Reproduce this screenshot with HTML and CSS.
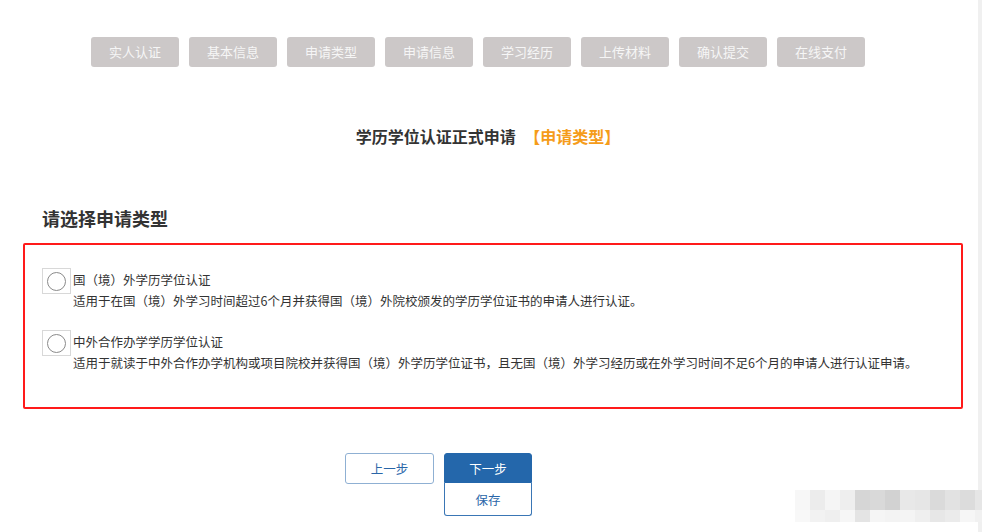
FILE: index.html
```html
<!DOCTYPE html>
<html lang="zh-CN">
<head>
<meta charset="utf-8">
<title>学历学位认证正式申请</title>
<link rel="stylesheet" href="styles.css">
</head>
<body>
<div class="page">
  <main class="main">
    <nav class="steps">
      <span class="step">实人认证</span>
      <span class="step">基本信息</span>
      <span class="step">申请类型</span>
      <span class="step">申请信息</span>
      <span class="step">学习经历</span>
      <span class="step">上传材料</span>
      <span class="step">确认提交</span>
      <span class="step">在线支付</span>
    </nav>
    <h1 class="title">学历学位认证正式申请 <span class="title-tag">【申请类型】</span></h1>
    <h2 class="heading">请选择申请类型</h2>
    <section class="options">
      <label class="option">
        <span class="radio"><span class="radio-dot"></span></span>
        <span class="option-text">
          <span class="option-name">国（境）外学历学位认证</span>
          <span class="option-desc">适用于在国（境）外学习时间超过6个月并获得国（境）外院校颁发的学历学位证书的申请人进行认证。</span>
        </span>
      </label>
      <label class="option">
        <span class="radio"><span class="radio-dot"></span></span>
        <span class="option-text">
          <span class="option-name">中外合作办学学历学位认证</span>
          <span class="option-desc">适用于就读于中外合作办学机构或项目院校并获得国（境）外学历学位证书，且无国（境）外学习经历或在外学习时间不足6个月的申请人进行认证申请。</span>
        </span>
      </label>
    </section>
    <div class="actions">
      <button class="btn btn-prev">上一步</button>
      <div class="action-col">
        <button class="btn btn-next">下一步</button>
        <button class="btn btn-save">保存</button>
      </div>
    </div>
    <div class="mosaic">
      <span class="tile" style="background:#f7f7f7"></span><span class="tile" style="background:#ececec"></span><span class="tile" style="background:#f5f5f5"></span><span class="tile" style="background:#eeeeee"></span><span class="tile" style="background:#d6d6d6"></span><span class="tile" style="background:#d9d9d9"></span><span class="tile" style="background:#d2d2d2"></span><span class="tile" style="background:#e8e8e8"></span><span class="tile" style="background:#e6e6e6"></span><span class="tile" style="background:#dadada"></span><span class="tile" style="background:#e2e2e2"></span><span class="tile" style="background:#dcdcdc"></span><span class="tile" style="background:#e6e6e6"></span>
      <span class="tile" style="background:#f8f8f8"></span><span class="tile" style="background:#f2f2f2"></span><span class="tile" style="background:#efefef"></span><span class="tile" style="background:#f6f6f6"></span><span class="tile" style="background:#e4e4e4"></span><span class="tile" style="background:#f5f5f5"></span><span class="tile" style="background:#f3f3f3"></span><span class="tile" style="background:#f4f4f4"></span><span class="tile" style="background:#efefef"></span><span class="tile" style="background:#e7e7e7"></span><span class="tile" style="background:#ebebeb"></span><span class="tile" style="background:#f6f6f6"></span><span class="tile" style="background:#f1f1f1"></span>
    </div>
  </main>
  <div class="scroll-edge"></div>
</div>
</body>
</html>
```
FILE: styles.css
```css
* { box-sizing: border-box; }
html, body { margin: 0; padding: 0; background: #fff; }
body {
  font-family: "Noto Sans CJK SC", "Microsoft YaHei", "Noto Sans", sans-serif;
  color: #333;
  width: 982px;
  height: 532px;
  overflow: hidden;
}
.page { display: flex; height: 532px; }
.main { flex: 1; position: relative; display: flex; flex-direction: column; }
.scroll-edge { width: 4px; background: #f0f0f0; }

.steps {
  display: flex;
  gap: 10px;
  padding: 37px 0 0 91px;
}
.step {
  width: 88px;
  height: 30px;
  background: #ccc8c8;
  border-radius: 3px;
  color: #f6f6f6;
  font-size: 13px;
  line-height: 30px;
  text-align: center;
}

.title {
  margin: 57px 0 0 -2px;
  font-size: 16px;
  line-height: 24px;
  font-weight: 700;
  text-align: center;
  color: #333;
}
.title-tag { color: #f59c1a; margin-left: 5px; }

.heading {
  margin: 57px 0 0 42px;
  font-size: 18px;
  line-height: 26px;
  font-weight: 700;
  color: #333;
}

.options {
  margin: 12px 15px 0 23px;
  border: 2px solid #ff1a1a;
  border-radius: 2px;
  padding: 23px 0 34px 17px;
  display: flex;
  flex-direction: column;
  gap: 19px;
}
.option { display: flex; align-items: flex-start; }
.radio {
  width: 29px;
  height: 26px;
  border: 1px solid #d8d8d8;
  display: flex;
  align-items: center;
  justify-content: center;
  flex: none;
}
.radio-dot {
  width: 19px;
  height: 19px;
  border: 1.5px solid #8a8a8a;
  border-radius: 50%;
}
.option-text {
  display: flex;
  flex-direction: column;
  margin: 1px 0 0 2px;
  font-size: 12.5px;
  line-height: 21px;
  color: #333;
}

.actions {
  display: flex;
  gap: 10px;
  margin-top: 44px;
  padding-left: 345px;
  align-items: flex-start;
}
.action-col { display: flex; flex-direction: column; }
.btn {
  font-family: inherit;
  font-size: 12.5px;
  width: 89px;
  height: 31px;
  padding: 0;
  border-radius: 3px;
  cursor: pointer;
}
.btn-prev {
  background: #fff;
  border: 1px solid #8fb0d3;
  color: #2a66a8;
}
.btn-next {
  width: 88px;
  height: 30px;
  background: #2467ab;
  border: 1px solid #2467ab;
  color: #fff;
  border-radius: 3px 3px 0 0;
}
.btn-save {
  width: 88px;
  height: 33px;
  background: #fff;
  border: 1px solid #3a76b5;
  border-top: none;
  color: #2a66a8;
  border-radius: 0 0 3px 3px;
}

.mosaic {
  position: absolute;
  left: 795px;
  top: 490px;
  display: grid;
  grid-template-columns: repeat(13, 15px);
  grid-template-rows: 20px 12px;
}
.tile { display: block; }
```
